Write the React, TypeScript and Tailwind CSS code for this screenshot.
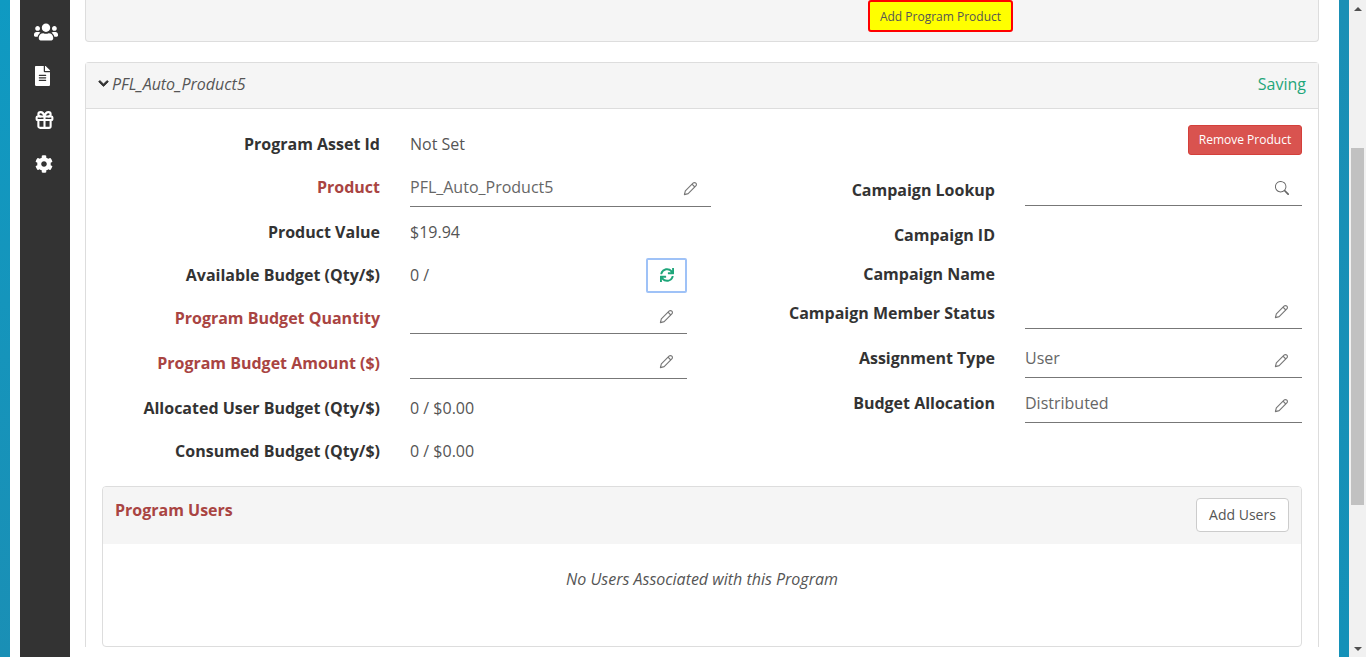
import type { ReactNode } from "react";
import { FaUsers, FaFileAlt, FaCog, FaChevronDown, FaSync } from "react-icons/fa";
import { BsSearch } from "react-icons/bs";
import { Gift } from "lucide-react";

const labelClass = "h-[30px] flex items-center justify-end text-[16px] font-bold text-[#333]";
const requiredClass = "h-[30px] flex items-center justify-end text-[16px] font-bold text-[#a94442]";

function PencilIcon() {
  return (
    <svg viewBox="0 0 16 16" className="w-[15px] h-[15px]" fill="none" stroke="#777" strokeWidth="1.2" strokeLinejoin="round">
      <path d="M1.5 14.5 L2.5 10.5 L10.7 2.3 a2.1 2.1 0 0 1 3 3 L5.5 13.5 Z" />
      <path d="M9.6 3.4 l3 3" />
    </svg>
  );
}

function Row({ label, required, rowClass, children }: { label: string; required?: boolean; rowClass: string; children?: ReactNode }) {
  return (
    <div className={`flex items-start ${rowClass}`}>
      <div className={`w-[278px] shrink-0 ${required ? requiredClass : labelClass}`}>{label}</div>
      <div className="ml-[30px] flex-1 min-w-0">{children}</div>
    </div>
  );
}

function RightRow({ label, rowClass, children }: { label: string; rowClass: string; children?: ReactNode }) {
  return (
    <div className={`flex items-start ${rowClass}`}>
      <div className={`w-[302px] shrink-0 ${labelClass}`}>{label}</div>
      <div className="ml-[30px] flex-1 min-w-0">{children}</div>
    </div>
  );
}

function Field({ value, boxClass, iconClass, icon }: { value?: string; boxClass: string; iconClass: string; icon?: ReactNode }) {
  return (
    <div className={`flex items-start justify-between border-b border-[#777] text-[16px] text-[#666] ${boxClass}`}>
      <span className="h-[30px] flex items-center">{value}</span>
      <span className={`flex items-center text-[#666] ${iconClass}`}>{icon ?? <PencilIcon />}</span>
    </div>
  );
}

export default function App() {
  return (
    <div className="w-[1366px] h-[657px] flex overflow-hidden bg-white font-['Open_Sans',sans-serif]">
      <div className="w-[10px] bg-gradient-to-b from-[#0f9ac2] to-[#1a8fb5]" />
      <div className="w-[10px]" />

      {/* Side nav */}
      <div className="w-[50px] bg-[#333] flex flex-col items-center pt-[21px] gap-[22px] text-white">
        <FaUsers className="w-[24px] h-[22px] ml-[2px]" />
        <FaFileAlt className="w-[15px] h-[20px] my-[1px] -ml-[6px]" />
        <Gift className="w-[21px] h-[22px] -ml-[2px]" strokeWidth={2.4} />
        <FaCog className="w-[18px] h-[22px] -ml-[3px]" />
      </div>

      <div className="flex-1 min-w-0 pl-[15px] pr-[20px]">
        {/* Previous product footer */}
        <div className="h-[42px] bg-[#f5f5f5] border border-t-0 border-[#ddd] rounded-b-[4px] pl-[782px]">
          <button className="w-[145px] h-[32px] pt-[1px] bg-[#ffff00] border-2 border-[#ff0000] rounded-[3px] text-[12px] text-[#555]">
            Add Program Product
          </button>
        </div>

        <div className="mt-[20px] border border-b-0 border-[#ddd] rounded-t-[4px]">
          <div className="h-[46px] bg-[#f5f5f5] border-b border-[#ddd] flex items-center justify-between px-[12px] pb-[4px]">
            <div className="flex items-center gap-[3px] text-[16px] italic text-[#555]">
              <FaChevronDown className="w-[11px] h-[11px] text-[#333]" stroke="currentColor" strokeWidth={40} />
              PFL_Auto_Product5
            </div>
            <span className="text-[16px] text-[#1fa67a]">Saving</span>
          </div>

          <div className="px-[16px] pt-[16px]">
            <div className="flex">
              {/* Left column */}
              <div className="w-[609px] pt-[4px]">
                <Row label="Program Asset Id" rowClass="mb-[13px]">
                  <div className="h-[30px] flex items-center text-[16px] text-[#555]">Not Set</div>
                </Row>
                <Row label="Product" required rowClass="mb-[10px] h-[35px]">
                  <Field value="PFL_Auto_Product5" boxClass="w-[301px] h-[35px] pr-[13px]" iconClass="h-[33px]" />
                </Row>
                <Row label="Product Value" rowClass="mb-[13px]">
                  <div className="h-[30px] flex items-center text-[16px] text-[#555]">$19.94</div>
                </Row>
                <Row label="Available Budget (Qty/$)" rowClass="mb-[13px]">
                  <div className="w-[277px] h-[30px] flex items-center justify-between text-[16px] text-[#555]">
                    <span>0 /</span>
                    <button className="w-[41px] h-[35px] border-2 border-[#9fc2f7] rounded-[2px] flex items-center justify-center text-[#1fa67a]">
                      <FaSync className="w-[14px] h-[14px]" />
                    </button>
                  </div>
                </Row>
                <Row label="Program Budget Quantity" required rowClass="mb-[14px]">
                  <Field boxClass="w-[277px] h-[31px] pr-[13px]" iconClass="h-[26px]" />
                </Row>
                <Row label="Program Budget Amount ($)" required rowClass="mb-[14px]">
                  <Field boxClass="w-[277px] h-[31px] pr-[13px]" iconClass="h-[26px]" />
                </Row>
                <Row label="Allocated User Budget (Qty/$)" rowClass="mb-[13px]">
                  <div className="h-[30px] flex items-center text-[16px] text-[#555]">0 / $0.00</div>
                </Row>
                <Row label="Consumed Budget (Qty/$)" rowClass="">
                  <div className="h-[30px] flex items-center text-[16px] text-[#555]">0 / $0.00</div>
                </Row>
              </div>

              {/* Right column */}
              <div className="flex-1 min-w-0 -ml-[18px]">
                <div className="flex justify-end mb-[20px]">
                  <button className="w-[114px] h-[30px] bg-[#d9534f] border border-[#d43f3a] rounded-[3px] text-[12px] font-medium text-white">
                    Remove Product
                  </button>
                </div>
                <RightRow label="Campaign Lookup" rowClass="mb-[14px]">
                  <Field boxClass="h-[31px] pr-[13px]" iconClass="h-[26px]" icon={<BsSearch className="w-[14px] h-[14px]" />} />
                </RightRow>
                <RightRow label="Campaign ID" rowClass="mb-[9px]" />
                <RightRow label="Campaign Name" rowClass="mb-[9px]" />
                <RightRow label="Campaign Member Status" rowClass="mb-[14px]">
                  <Field boxClass="h-[31px] pr-[13px]" iconClass="h-[26px]" />
                </RightRow>
                <RightRow label="Assignment Type" rowClass="mb-[10px]">
                  <Field value="User" boxClass="h-[35px] pr-[13px]" iconClass="h-[34px]" />
                </RightRow>
                <RightRow label="Budget Allocation" rowClass="">
                  <Field value="Distributed" boxClass="h-[35px] pr-[13px]" iconClass="h-[34px]" />
                </RightRow>
              </div>
            </div>

            {/* Program users */}
            <div className="mt-[20px] h-[161px] border border-[#ddd] rounded-[4px] overflow-hidden">
              <div className="h-[57px] bg-[#f5f5f5] flex items-start justify-between px-[12px]">
                <h3 className="mt-[11px] text-[16px] font-bold text-[#a94442]">Program Users</h3>
                <button className="mt-[11px] w-[93px] h-[34px] pb-[1px] bg-white border border-[#ccc] rounded-[4px] text-[14px] text-[#555]">
                  Add Users
                </button>
              </div>
              <p className="mt-[23px] text-center text-[16px] italic text-[#555]">No Users Associated with this Program</p>
            </div>
          </div>
        </div>
      </div>

      <div className="w-[10px] bg-gradient-to-b from-[#1a8fb5] to-[#1491b8]" />

      {/* Scrollbar */}
      <div className="w-[17px] bg-[#f1f1f1] flex flex-col items-center">
        <div className="h-[17px] flex items-center justify-center">
          <div className="w-0 h-0 border-x-[4px] border-x-transparent border-b-[4px] border-b-[#505050]" />
        </div>
        <div className="mt-[131px] w-[13px] h-[357px] bg-[#c1c1c1]" />
        <div className="mt-auto h-[17px] flex items-center justify-center">
          <div className="w-0 h-0 border-x-[4px] border-x-transparent border-t-[4px] border-t-[#505050]" />
        </div>
      </div>
    </div>
  );
}
